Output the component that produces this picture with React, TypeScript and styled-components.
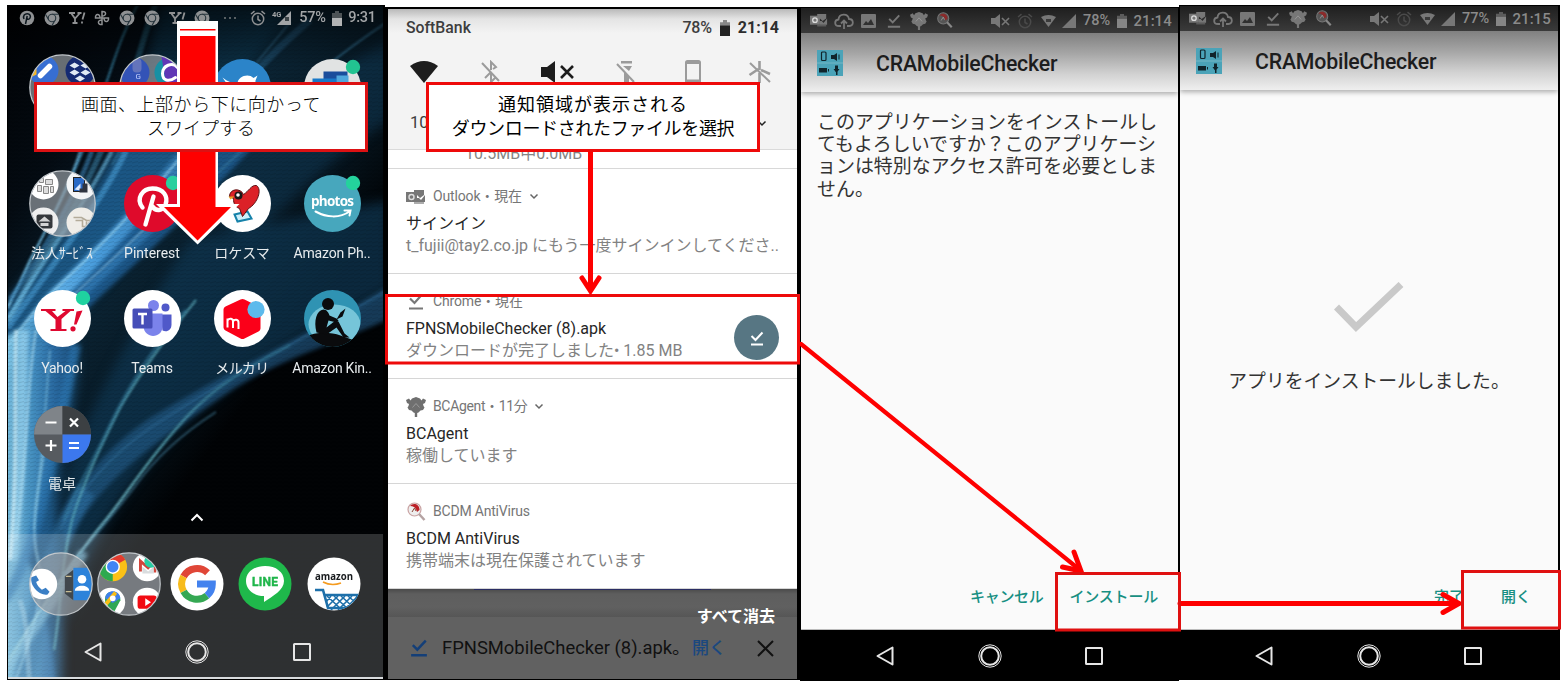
import React from "react";
import styled, { createGlobalStyle } from "styled-components";

const Global = createGlobalStyle`
  * { box-sizing: border-box; }
  body { margin: 0; background: #fff; font-family: Roboto, "Noto Sans CJK JP", sans-serif; }
  svg { display: block; flex: none; }
`;

const Stage = styled.main`
  position: relative;
  width: 1567px;
  height: 686px;
  overflow: hidden;
  display: flex;
  align-items: flex-start;
  padding: 5px 0 0 7px;
`;

/* ---------- shared text ---------- */
const Txt = styled.span<{ $s: number; $c?: string; $w?: number; $ls?: number }>`
  font-size: ${(p) => p.$s}px;
  color: ${(p) => p.$c ?? "inherit"};
  font-weight: ${(p) => p.$w ?? 400};
  letter-spacing: ${(p) => p.$ls ?? 0}px;
  line-height: 1.2;
  white-space: nowrap;
`;

const Cell = styled.div<{ $w: number }>`
  width: ${(p) => p.$w}px;
  flex: none;
  display: flex;
  justify-content: center;
  align-items: center;
`;

/* ---------- home screen ---------- */
const Home = styled.section`
  position: relative;
  width: 378px;
  height: 675px;
  border: 1px solid #000;
  border-right-width: 2px;
  overflow: hidden;
  background: #03070b;
  color: #e8ecee;
`;
const Wallpaper = styled.svg`
  position: absolute;
  left: 0;
  top: 0;
`;
const HomeContent = styled.div`
  position: relative;
  display: flex;
  flex-direction: column;
  height: 673px;
  border-bottom: 2px solid #d9dcde;
`;
const HomeStatus = styled.div`
  display: flex;
  align-items: center;
  height: 24px;
  padding-left: 6px;
  color: #a3a5a7;
`;
const AppGrid = styled.div`
  display: grid;
  grid-template-columns: repeat(4, 90px);
  grid-auto-rows: 115.5px;
  padding: 24px 0 0 9px;
  height: 483px;
`;
const AppTile = styled.div`
  display: flex;
  flex-direction: column;
  align-items: center;
`;
const AppIcon = styled.div`
  height: 67px;
  display: flex;
  align-items: center;
  margin-bottom: 8px;
`;
const Chevron = styled.div`
  height: 21px;
  display: flex;
  justify-content: center;
  padding-left: 2px;
`;
const Dock = styled.div`
  height: 143px;
  background: rgba(255, 255, 255, 0.18);
`;
const DockRow = styled.div`
  display: flex;
  align-items: center;
  height: 100px;
  padding-left: 19px;
`;
const NavRow = styled.div<{ $h: number; $black?: boolean; $l: number }>`
  display: flex;
  flex: none;
  align-items: center;
  height: ${(p) => p.$h}px;
  padding-left: ${(p) => p.$l}px;
  padding-top: ${(p) => (p.$black ? 2 : 0)}px;
  background: ${(p) => (p.$black ? "#000" : "transparent")};
`;

const NavIcons = () => (
  <>
    <Cell $w={104.5}>
      <svg width="20" height="24" viewBox="0 0 20 24" fill="none" stroke="#e6e6e6" strokeWidth="2" strokeLinejoin="round">
        <path d="M2.500 12 L17.500 3.500 V20.500 Z" />
      </svg>
    </Cell>
    <Cell $w={104.5}>
      <svg width="26" height="26" viewBox="0 0 26 26" fill="none" stroke="#e6e6e6">
        <circle cx="13" cy="13" r="11.200" strokeWidth="1" />
        <circle cx="13" cy="13" r="8.800" strokeWidth="2" />
      </svg>
    </Cell>
    <Cell $w={104.5}>
      <svg width="20" height="20" viewBox="0 0 20 20" fill="none" stroke="#e6e6e6" strokeWidth="2">
        <rect x="2" y="2" width="16" height="16" rx=".5" />
      </svg>
    </Cell>
  </>
);

const HomeWallpaper = () => (
  <Wallpaper width="376" height="673" viewBox="8 6 376 673" fill="none">
    <defs>
      <linearGradient id="base" x1="0" y1="0" x2=".75" y2="1">
        <stop offset="0" stopColor="#010204" />
        <stop offset=".2" stopColor="#040b12" />
        <stop offset=".38" stopColor="#0b2434" />
        <stop offset=".55" stopColor="#071722" />
        <stop offset=".68" stopColor="#010305" />
      </linearGradient>
      <linearGradient id="swoosh" gradientUnits="userSpaceOnUse" x1="10" y1="370" x2="215" y2="150">
        <stop offset="0" stopColor="#7cc6f0" />
        <stop offset=".45" stopColor="#4a9edd" />
        <stop offset="1" stopColor="#2b6ea2" />
      </linearGradient>
      <linearGradient id="fadeUp" gradientUnits="userSpaceOnUse" x1="8" y1="340" x2="150" y2="6">
        <stop offset="0" stopColor="#7cc8ee" />
        <stop offset=".55" stopColor="#4493bd" />
        <stop offset="1" stopColor="#1f586c" />
      </linearGradient>
      <linearGradient id="leftGlow" gradientUnits="userSpaceOnUse" x1="8" y1="0" x2="74" y2="0">
        <stop offset="0" stopColor="#7cc3e3" />
        <stop offset=".35" stopColor="#4a97c8" />
        <stop offset=".7" stopColor="#2a6ba3" />
        <stop offset="1" stopColor="#1b4d7a" />
      </linearGradient>
      <linearGradient id="thin" gradientUnits="userSpaceOnUse" x1="230" y1="375" x2="60" y2="600">
        <stop offset="0" stopColor="#2f6f8c" />
        <stop offset=".4" stopColor="#5fb0bd" />
        <stop offset="1" stopColor="#8cc8dc" />
      </linearGradient>
      <linearGradient id="topShade" x1="0" y1="0" x2="0" y2="1">
        <stop offset="0" stopColor="#000" stopOpacity=".6" />
        <stop offset="1" stopColor="#000" stopOpacity="0" />
      </linearGradient>
      <filter id="soft" filterUnits="userSpaceOnUse" x="-40" y="-40" width="480" height="780" colorInterpolationFilters="sRGB"><feGaussianBlur stdDeviation="6" /></filter>
      <filter id="mid" filterUnits="userSpaceOnUse" x="-40" y="-40" width="480" height="780" colorInterpolationFilters="sRGB"><feGaussianBlur stdDeviation="2.200" /></filter>
      <filter id="fine" filterUnits="userSpaceOnUse" x="-40" y="-40" width="480" height="780" colorInterpolationFilters="sRGB"><feGaussianBlur stdDeviation=".9" /></filter>
      <pattern id="weave" width="6" height="4" patternUnits="userSpaceOnUse"><path d="M0 3 L6 1.500" stroke="#000" strokeOpacity=".1" /></pattern>
    </defs>
    <rect x="8" y="6" width="376" height="673" fill="url(#base)" />
    <g filter="url(#soft)">
      <path d="M160 0 C145 90 110 180 60 250 L100 250 C170 170 230 90 300 0Z" fill="#0f3a54" opacity=".55" />
      <path d="M390 40 C300 90 230 150 190 210 L250 240 C300 190 340 150 390 120Z" fill="#103854" opacity=".55" />
      <path d="M190 240 C150 300 90 400 64 480 L64 620 C90 530 150 440 250 370 C310 330 350 310 390 290 V200 Z" fill="#0f3650" opacity=".75" />
      <path d="M118 145 C84 210 35 270 0 312 V400 C70 320 130 260 170 190 L190 145Z" fill="#1f5f90" opacity=".85" />
      <path d="M0 350 L66 310 C84 350 74 400 62 450 C50 510 66 600 60 690 H0 Z" fill="#23659a" opacity=".85" />
    </g>
    <g filter="url(#mid)">
      <path d="M390 285 C300 338 230 370 150 418 C110 445 80 480 60 520 L66 545 C100 480 150 445 235 388 C290 355 350 338 390 318 Z" fill="#245f8e" opacity=".6" />
      <path d="M190 148 C138 212 90 268 40 320 C25 340 14 360 4 385 L4 440 C30 380 60 334 92 304 C146 254 205 200 252 148 Z" fill="#1f5f96" opacity=".8" />
      <path d="M183 158 C134 220 92 262 56 296 C34 322 16 344 4 366" stroke="url(#swoosh)" strokeWidth="15" />
      <path d="M205 176 C150 232 108 268 76 300 C50 332 28 362 6 410" stroke="#367fb9" strokeWidth="7" opacity=".75" />
      <path d="M0 340 L64 300 C86 340 68 390 56 440 C46 490 34 520 28 560 C44 600 52 640 56 690 H0 Z" fill="url(#leftGlow)" opacity=".9" />
      <path d="M76 345 C64 400 55 450 40 512 C32 540 20 580 4 600" stroke="#2c76b0" strokeWidth="10" opacity=".7" />
      <path d="M24 330 C22 400 24 460 12 560" stroke="#9fd9f3" strokeWidth="10" opacity=".65" />
      <path d="M86 490 C60 530 40 590 22 690" stroke="#2f72a4" strokeWidth="20" opacity=".6" />
      <path d="M84 552 C60 590 34 630 4 672" stroke="#82c2de" strokeWidth="9" opacity=".65" />
    </g>
    <g filter="url(#fine)">
      <path d="M140 0 C118 40 112 70 100 100 C88 145 60 205 30 260 L8 308" stroke="url(#fadeUp)" strokeWidth="2.200" opacity=".85" />
      <path d="M157 0 C134 60 134 90 110 130 C90 180 65 225 38 266 L8 322" stroke="url(#fadeUp)" strokeWidth="6" opacity=".5" />
      <path d="M80 151 C68 190 40 240 8 306" stroke="#6db6dc" strokeWidth="1.800" opacity=".85" />
      <path d="M92 151 C76 195 44 250 10 300" stroke="#3c83b6" strokeWidth="5" opacity=".6" />
      <path d="M112 151 C84 205 48 255 8 318" stroke="#70bfe8" strokeWidth="4" opacity=".6" />
      <path d="M126 151 C100 205 54 262 8 328" stroke="#4a9cd3" strokeWidth="6" opacity=".6" />
      <path d="M182 156 C135 212 85 262 46 298 C28 318 14 338 4 350" stroke="#9ddaf7" strokeWidth="2" opacity=".7" />
      <path d="M178 196 C140 235 100 270 68 300" stroke="#9bd4f4" strokeWidth="1.800" opacity=".55" />
      <path d="M178 60 C150 105 130 130 112 165" stroke="#3d86a9" strokeWidth="1.600" opacity=".6" />
      <path d="M390 20 C345 50 300 84 270 120 C250 145 225 165 180 208" stroke="#3a7ea3" strokeWidth="1.800" opacity=".7" />
      <path d="M310 20 C282 44 268 58 252 76" stroke="#24587a" strokeWidth="7" opacity=".55" />
      <path d="M290 22 C268 50 258 60 246 76" stroke="#3a7598" strokeWidth="1.600" opacity=".6" />
      <path d="M390 289 C300 340 230 376 150 428 C110 456 80 490 60 530" stroke="#3a7ba8" strokeWidth="1.800" opacity=".45" />
      <path d="M196 300 C160 345 136 380 120 408 C104 440 84 480 72 520 C60 570 62 600 54 650" stroke="#5fb0c0" strokeWidth="2.400" opacity=".7" />
      <path d="M186 310 C150 350 126 392 110 425 C94 460 80 480 64 520" stroke="#3a86a8" strokeWidth="3.500" opacity=".45" />
      <path d="M290 345 C230 375 200 400 175 430 C142 468 124 498 104 522 C74 558 40 610 4 668" stroke="url(#thin)" strokeWidth="2.600" opacity=".85" />
      <path d="M216 412 C180 435 152 462 134 488 C110 520 80 552 52 590" stroke="#447f9c" strokeWidth="1.600" opacity=".65" />
      <path d="M50 350 C46 400 42 460 34 530" stroke="#8ccfee" strokeWidth="2.500" opacity=".4" />
      <path d="M36 330 C26 390 28 450 16 540" stroke="#b4e3f7" strokeWidth="3" opacity=".5" />
      <path d="M16 330 C14 390 18 480 10 560" stroke="#dff5fc" strokeWidth="4" opacity=".55" />
      <path d="M46 440 C36 500 30 530 38 560 C46 600 30 640 14 684" stroke="#9bd8ef" strokeWidth="3" opacity=".45" />
      <path d="M20 600 C30 630 26 655 30 684" stroke="#c1e6f4" strokeWidth="5" opacity=".35" />
    </g>
    <rect x="8" y="6" width="376" height="673" fill="url(#weave)" />
    <rect x="8" y="6" width="376" height="60" fill="url(#topShade)" />
  </Wallpaper>
);

const Chrome = ({ x, y, r, gray }: { x: number; y: number; r: number; gray?: boolean }) => (
  <g transform={`translate(${x} ${y}) scale(${r / 10})`}>
    <circle r="10" fill={gray ? "#8f9193" : "#fbc116"} />
    {!gray && <path d="M0 0 L-8.700 -5 A10 10 0 0 1 8.700 -5 Z" fill="#e33b2e" />}
    {!gray && <path d="M0 0 L-8.700 -5 A10 10 0 0 0 0 10 Z" fill="#2da94f" />}
    {gray && <path d="M0 -5 H9 M-4.300 2.500 L-8.800 -5 M4.300 2.500 L0 10" stroke="#26343c" strokeWidth="1.500" />}
    <circle r="5" fill={gray ? "#8f9193" : "#fff"} stroke={gray ? "#26343c" : "none"} strokeWidth="1.500" />
    {!gray && <circle r="4" fill="#4285f4" />}
  </g>
);

const SmallChrome = () => (
  <svg width="16" height="16" viewBox="0 0 16 16"><Chrome x={8} y={8} r={7.5} gray /></svg>
);
const YSmall = () => (
  <svg width="18" height="14" viewBox="0 0 18 14" fill="none" stroke="#8f9193" strokeWidth="1.800">
    <path d="M1 2 H7 M3 2 L7 7.500 L12 2 M9.500 2 H13.500 M7 7 V12 M4.500 12 H9.500 M16.500 1.500 L14.500 8.500 M14 10.500 V12.500" />
  </svg>
);
const Alarm = ({ c = "#8f9193" }: { c?: string }) => (
  <svg width="16" height="16" viewBox="0 0 16 16" fill="none" stroke={c} strokeWidth="1.500">
    <circle cx="8" cy="9" r="5.700" /><path d="M8 5.500 V9.500 L10.500 11 M1 4 L4.500 1.200 M15 4 L11.500 1.200" />
  </svg>
);
const Battery = ({ c, top, h = 15 }: { c: string; top: string; h?: number }) => (
  <svg width="10" height={h} viewBox="0 0 10 15" preserveAspectRatio="none">
    <path d="M0 2 H3 V0 H7 V2 H10 V5 H0 Z" fill={top} /><rect y="5" width="10" height="10" fill={c} />
  </svg>
);

const Disc = ({ fill, dot, children }: { fill: string; dot?: string; children?: React.ReactNode }) => (
  <svg width="67" height="67" viewBox="-33.5 -33.5 67 67">
    <circle r="28.500" fill={fill} />
    {children}
    {dot && <circle cx="20.500" cy="-20.500" r="7.200" fill={dot} />}
  </svg>
);
const Folder = ({ id, size = 67, children }: { id: string; size?: number; children: React.ReactNode }) => (
  <svg width={size} height={size} viewBox="-33.5 -33.5 67 67">
    <clipPath id={id}><circle r="32.500" /></clipPath>
    <circle r="32.500" fill="#9a9fa5" fillOpacity=".68" />
    <g clipPath={`url(#${id})`}>{children}</g>
    <circle r="32.700" fill="none" stroke="#c3c8cc" strokeWidth="1.300" />
  </svg>
);

const PencilFolder = () => (
  <Folder id="f1">
    <circle cx="-19" cy="-17" r="15" fill="#376ed2" />
    <path d="M-34 -17 l8 -3 v7 l-8 4z" fill="#f4b728" />
    <path d="M-22 -12 L-13 -21" stroke="#fff" strokeWidth="5.500" strokeLinecap="round" />
    <circle cx="18" cy="-17" r="15" fill="#142a72" />
    <path d="M12 -25 l5 3 -5 3 -5 -3z M23 -25 l5 3 -5 3 -5 -3z M12 -18 l5 3 -5 3 -5 -3z M23 -18 l5 3 -5 3 -5 -3z M17.500 -12 l5 3 -5 3 -5 -3z" fill="#dfe9f4" />
  </Folder>
);
const GoogleFolder = () => (
  <Folder id="f2">
    <circle cx="-18" cy="-15" r="15" fill="#3353b7" />
    <rect x="-20" y="-29" width="9" height="14" rx="4" fill="#6474bb" />
    <text x="-17" y="-9" fontSize="8" fill="#c7d3ff" fontFamily="Roboto">G</text>
    <circle cx="17" cy="-15" r="15" fill="#1890a4" />
    <path d="M9 -31 A15 15 0 0 1 30 -4 L14 -1Z" fill="#6037b6" />
    <path d="M25 -20 C20 -26 10 -22 10 -14 C10 -7 16 -5 23 -10" fill="none" stroke="#fff" strokeWidth="3" strokeLinecap="round" />
  </Folder>
);
const BizFolder = () => (
  <Folder id="f3">
    <circle cx="-19" cy="-19" r="15" fill="#fff" />
    <path d="M-23 -25 h4 v4 h-4z M-17 -24 h7 v5 h-7z M-25 -18 h4 v6 h-4z M-19 -17 h5 v7 h-5z M-12 -17 h3 v6 h-3z" fill="#ddd" stroke="#888" strokeWidth="1" />
    <circle cx="19" cy="-19" r="15" fill="#f3f5f7" />
    <rect x="11" y="-26" width="11" height="14" fill="#2869c6" stroke="#222" /><path d="M12 -14 l6 -6 v7z" fill="#dceaff" /><path d="M20 -20 h5 v9 h-8 v-4 h3z" fill="#2e3440" />
    <circle cx="-19" cy="19" r="15" fill="#eee" />
    <rect x="-26" y="11" width="16" height="14" rx="2" fill="#34373b" /><path d="M-24 18 l6 -5 6 5z M-22 19.500 h8 v3 h-8z" fill="#d4d4d4" />
    <circle cx="19" cy="19" r="15" fill="#efede8" />
    <path d="M11 14 h8 l5 3 h4 M13 17 h7 M20 16 v7 h4 v-5" stroke="#b3ab99" strokeWidth="1.600" fill="none" />
  </Folder>
);

const homeApps: { label: string; icon: React.ReactNode; ls?: number }[] = [
  { label: "", icon: <PencilFolder /> },
  { label: "", icon: <GoogleFolder /> },
  {
    label: "", icon: (
      <Disc fill="#2b84c9">
        <path d="M-20 -10 C-15 -6 -10 -4 -5 -4 C-5 -11 6 -15 11 -9.500 L15 -12 L13 -7 C13 8 0 18 -17 12 C-12 12 -8 10 -6 7 C-12 6 -13 2 -13 0 Z" fill="#fff" />
      </Disc>
    ),
  },
  {
    label: "", icon: (
      <Disc fill="#e1e3e3" dot="#22c391">
        <rect x="-9" y="-16" width="24" height="20" fill="#1a4d9c" /><rect x="-20" y="-9" width="24" height="20" fill="#1878c8" /><rect x="4" y="-12" width="12" height="16" fill="#50a7dc" />
      </Disc>
    ),
  },
  { label: "法人ｻｰﾋﾞｽ", icon: <BizFolder />, ls: -0.2 },
  {
    label: "Pinterest", icon: (
      <Disc fill="#df0a2b" dot="#29cf9f">
        <path d="M-10 4 C-17 -5 -10 -15 0 -15 C11 -15 16 -7 13 1 C10 8 3 8 0 3 M1 -7 L-7 21" fill="none" stroke="#fff" strokeWidth="4.400" strokeLinecap="round" />
      </Disc>
    ),
  },
  {
    label: "ロケスマ", icon: (
      <Disc fill="#fff">
        <path d="M-8 11 L5 8 L9 15 L-5 18 Z" fill="#cdeffa" stroke="#1682aa" strokeWidth="2" />
        <path d="M-13 -7 C-13 -15 -2 -16 1 -9 C6 -12 9 -19 14 -18 C20 -14 15 0 6 5 L0 13 L-3 5 C-9 3 -9 -3 -9 -5 Z" fill="#dc2127" stroke="#5a1113" strokeWidth="1" />
        <path d="M-14 -7 h6 l-4 3z" fill="#e8a426" /><circle cx="-4" cy="-8" r="4" fill="#191919" /><circle cx="-4.500" cy="-8.500" r="1.800" fill="#fff" />
      </Disc>
    ),
  },
  {
    label: "Amazon Ph..", ls: -0.2, icon: (
      <Disc fill="#47a7bd" dot="#24d39c">
        <text x="0" y="2" textAnchor="middle" fontSize="13.500" fontWeight="700" fill="#fff" fontFamily="Open Sans" textLength="43">photos</text>
        <path d="M-17 8 C-6 14 7 15 17 8 M12 7 H18 L17 12" fill="none" stroke="#fff" strokeWidth="2" strokeLinecap="round" />
      </Disc>
    ),
  },
  {
    label: "Yahoo!", ls: -0.2, icon: (
      <Disc fill="#fff" dot="#1fd2a0">
        <path d="M-21.500 -9.500 H-7 V-7.500 H-10.500 L-5 -1.500 L3 -7.500 H0 V-9.500 H11.500 V-7.500 H8 L-1 0.500 V10.500 H4 V12.500 H-12 V10.500 H-7 V1 L-17 -7.500 H-21.500 Z M14 -7 L20 -8 L14 6 H11.500 Z" fill="#df0930" /><circle cx="10.500" cy="10.300" r="2.600" fill="#df0930" />
      </Disc>
    ),
  },
  {
    label: "Teams", ls: -0.1, icon: (
      <Disc fill="#fff">
        <circle cx="1" cy="-13" r="5.500" fill="#7b83eb" /><circle cx="13" cy="-11" r="4" fill="#5059c9" />
        <path d="M8 -4 H19 V6 C19 12 14 14 10 12 Z" fill="#5059c9" /><path d="M-8 -5 H10 V8 C10 20 -8 21 -9 8 Z" fill="#7b83eb" />
        <rect x="-20" y="-10" width="20" height="20" rx="1.500" fill="#464eb8" />
        <path d="M-14.500 -4.500 H-5.500 M-10 -4.500 V6" stroke="#fff" strokeWidth="2.400" />
      </Disc>
    ),
  },
  {
    label: "メルカリ", ls: -0.5, icon: (
      <Disc fill="#fff">
        <path d="M-19 -9 Q-19 -11 -17 -12 L-2 -19 Q0 -20 2 -19 L18 -11 V10 Q18 12 16 13 L2 20 Q0 21 -2 20 L-17 12 Q-19 11 -19 9 Z" fill="#fb0019" />
        <path d="M-15 9 V0 M-15 2 C-13 -1 -9.500 0 -9.500 3 V9.500 M-9.500 3 C-8 0 -4 1 -4 4 V10.500" fill="none" stroke="#fff" strokeWidth="2" />
        <circle cx="13.500" cy="-9" r="8.600" fill="#5dbaec" />
      </Disc>
    ),
  },
  {
    label: "Amazon Kin..", ls: -0.25, icon: (
      <Disc fill="#2f93b3">
        <clipPath id="kin"><circle r="28.500" /></clipPath>
        <g clipPath="url(#kin)">
          <ellipse cx="2" cy="6" rx="26" ry="20" fill="#8fd6e6" opacity=".75" />
          <path d="M-30 20 C-16 12 -2 14 8 17 L22 22 L17 32 H-24Z" fill="#0a0b0d" />
          <circle cx="-4.500" cy="-14.500" r="6" fill="#0a0b0d" />
          <path d="M-16 14 C-19 2 -16 -8 -9 -9 C-6 -9 -4 -6 -3 -3 L4 0 L6 2 L4 4 L-4 2 L-6 9 L3 2 L6 3 L12 15 L17 19 L11 19 L4 9 L-6 16 Z" fill="#0a0b0d" />
          <path d="M4 1 L8 -6 L13 -10 L10 -2 Z" fill="#0a0b0d" />
        </g>
      </Disc>
    ),
  },
  {
    label: "電卓", icon: (
      <Disc fill="#575b60">
        <path d="M0 0 H-28.500 A28.500 28.500 0 0 1 0 -28.500Z" fill="#7f8489" /><path d="M0 0 V-28.500 A28.500 28.500 0 0 1 28.500 0Z" fill="#3c4043" /><path d="M0 0 H28.500 A28.500 28.500 0 0 1 0 28.500Z" fill="#3c78ee" />
        <path d="M-17 -12 H-6 M-17 11 H-6 M-11.500 5.500 V16.500 M6.500 8.500 H16.500 M6.500 13.500 H16.500 M7.500 -16 L15.500 -8 M15.500 -16 L7.500 -8" stroke="#fff" strokeWidth="2.200" />
      </Disc>
    ),
  },
];

const HomeScreen = () => (
  <Home>
    <HomeWallpaper />
    <HomeContent>
      <HomeStatus>
        <Cell $w={25}>
          <svg width="16" height="16" viewBox="0 0 16 16"><circle cx="8" cy="8" r="7.300" fill="#8f9193" /><path d="M5 9 C3.500 5.500 6 3.700 8.200 3.700 C11 3.700 12 6 11 8 C10 10 8 9.500 8 8 M8.200 6 L6.500 14" fill="none" stroke="#0b151c" strokeWidth="1.500" /></svg>
        </Cell>
        <Cell $w={25}><SmallChrome /></Cell>
        <Cell $w={25}><YSmall /></Cell>
        <Cell $w={25}>
          <svg width="16" height="16" viewBox="0 0 16 16" fill="none" stroke="#8f9193" strokeWidth="1.500"><path d="M8 8 V1.500 C12.500 1 13 6 8 6 M8 8 H14.500 C15 12.500 10 13 10 8 M8 8 V14.500 C3.500 15 3 10 8 10 M8 8 H1.500 C1 3.500 6 3 6 8" /></svg>
        </Cell>
        <Cell $w={25}><SmallChrome /></Cell>
        <Cell $w={25}><SmallChrome /></Cell>
        <Cell $w={26}><YSmall /></Cell>
        <Cell $w={24}><SmallChrome /></Cell>
        <Cell $w={32}><svg width="14" height="4" viewBox="0 0 14 4" fill="#75787a"><circle cx="2" cy="2" r="1" /><circle cx="7" cy="2" r="1" /><circle cx="12" cy="2" r="1" /></svg></Cell>
        <Cell $w={24}><Alarm /></Cell>
        <Cell $w={24}>
          <svg width="20" height="16" viewBox="0 0 20 16"><path d="M19 1 V15 H5 Z" fill="#a3a5a7" /><path d="M13 7 h4 v4 h-4z" fill="#3b4347" /><text x="0" y="7" fontSize="7.500" fontWeight="700" fill="#a3a5a7" fontFamily="Roboto">4G</text></svg>
        </Cell>
        <Cell $w={37}><Txt $s={14.500} $w={500} $ls={-0.2}>57%</Txt></Cell>
        <Cell $w={11}>
          <svg width="10" height="15" viewBox="0 0 10 15"><path d="M0 2 H3 V0 H7 V2 H10 V7 H0 Z" fill="#4d5356" /><rect y="7" width="10" height="8" fill="#b2b4b5" /></svg>
        </Cell>
        <Cell $w={40}><Txt $s={14.500} $w={500} $ls={-0.3}>9:31</Txt></Cell>
      </HomeStatus>
      <AppGrid>
        {homeApps.map((a, i) => (
          <AppTile key={i}>
            <AppIcon>{a.icon}</AppIcon>
            <Txt $s={14} $ls={a.ls ?? 0}>{a.label}</Txt>
          </AppTile>
        ))}
      </AppGrid>
      <Chevron>
        <svg width="14" height="9" viewBox="0 0 14 9" fill="none" stroke="#fff" strokeWidth="2"><path d="M1.500 7.500 L7 2 L12.500 7.500" /></svg>
      </Chevron>
      <Dock>
        <DockRow>
          <Cell $w={68}>
            <Folder id="f4" size={64}>
              <circle cx="-20" cy="0" r="16" fill="#fff" />
              <path d="M-31 -7 C-33 3 -21 13 -14 11 L-12 8 L-16 4 L-20 6 C-23 4 -25 1 -26 -2 L-23 -4 L-26 -9 Z" fill="#3b7fc5" />
              <path d="M4 -8 L13 -15 V17 L4 10Z" fill="#41484d" /><rect x="13" y="-17" width="22" height="34" fill="#2d83da" />
              <circle cx="22" cy="-5" r="4.500" fill="#fff" /><path d="M14.500 7 C14.500 0 29.500 0 29.500 7Z" fill="#fff" /><path d="M5 -8 h6 M5 8 h6" stroke="#c9bd94" strokeWidth="1.500" />
            </Folder>
          </Cell>
          <Cell $w={68}>
            <Folder id="f5" size={64}>
              <Chrome x={-17} y={-18} r={15} />
              <circle cx="19" cy="-18" r="15" fill="#fff" /><path d="M12 -13 V-24 L20 -17 L27 -24 V-12" fill="none" stroke="#d3453b" strokeWidth="3" /><path d="M14 -18 L20 -13 L26 -18 V-11 H14Z" fill="#d9dcde" />
              <circle cx="-19" cy="19" r="15" fill="#fff" /><path d="M-17 32 L-25 18 C-27 5 -9 5 -9 17Z" fill="#2ea755" /><path d="M-25 15 C-24 5 -10 5 -9 15 L-17 20Z" fill="#3e7fea" /><path d="M-24 21 L-14 9" stroke="#f9bd15" strokeWidth="4" /><circle cx="-17" cy="15" r="3" fill="#fff" />
              <circle cx="19" cy="19" r="15" fill="#fff" /><rect x="9" y="12" width="20" height="14" rx="3" fill="#f10b13" /><path d="M17 15 L23 19 L17 23Z" fill="#fff" />
              <circle cx="23" cy="-24" r="7" fill="#27cda2" />
            </Folder>
          </Cell>
          <Cell $w={68}>
            <svg width="54" height="54" viewBox="-27 -27 54 54"><circle r="26.500" fill="#fff" />
              <g fill="none" strokeWidth="7">
                <path d="M-13.400 -7.500 A15.300 15.300 0 0 1 10.500 -11.200" stroke="#e04637" /><path d="M-13.400 7.400 A15.300 15.300 0 0 1 -13.400 -7.500" stroke="#f7bb1b" />
                <path d="M10 11.600 A15.300 15.300 0 0 1 -13.400 7.400" stroke="#35a853" /><path d="M0 0 H15.300 A15.300 15.300 0 0 1 10 11.600" stroke="#4382ee" />
              </g>
            </svg>
          </Cell>
          <Cell $w={68}>
            <svg width="54" height="54" viewBox="-27 -27 54 54"><circle r="26.500" fill="#1fb84b" /><path d="M0 -18 C11 -18 19 -12 19 -3 C19 6 8 12 -1 18 V12 C-12 12 -19 5 -19 -3 C-19 -12 -11 -18 0 -18Z" fill="#fff" />
              <text x="0" y="1.500" textAnchor="middle" fontSize="12" fontWeight="700" fill="#20b64b" stroke="#20b64b" strokeWidth=".4" fontFamily="Roboto" textLength="26">LINE</text></svg>
          </Cell>
          <Cell $w={69}>
            <svg width="54" height="54" viewBox="-27 -27 54 54"><circle r="26.500" fill="#fff" />
              <clipPath id="ama"><circle r="26.500" /></clipPath>
              <text x="0" y="-4" textAnchor="middle" fontSize="11" fontWeight="700" fill="#16191c" fontFamily="Open Sans" textLength="38" lengthAdjust="spacingAndGlyphs">amazon</text>
              <path d="M-11 -2 C-5 1.200 1 1.200 7 -1" stroke="#f59b1f" strokeWidth="1.600" fill="none" />
              <g clipPath="url(#ama)" fill="none" stroke="#1e70aa" strokeWidth="1.600"><path d="M-19 6 H-11 L-6 24 H19 L24 11 H-9" strokeWidth="2.600" /><path d="M-7 12 L8 26 M0 12 L14 25 M7 12 L19 23 M14 12 L22 19 M-3 12 L-8 18 M4 12 L-7 23 M11 12 L-3 26 M18 12 L4 26 M24 12 L11 25" /></g></svg>
          </Cell>
        </DockRow>
        <NavRow $h={36} $l={32.5}><NavIcons /></NavRow>
      </Dock>
    </HomeContent>
  </Home>
);

/* ---------- notification shade ---------- */
const Shade = styled.section`
  width: 415px;
  height: 673px;
  margin-top: 2px;
  border: 1px solid #000;
  border-width: 2px 3px 1px 3px;
  background: #606060;
  display: flex;
  flex-direction: column;
`;
const QuickPanel = styled.div`
  position: relative;
  z-index: 1;
  height: 141px;
  flex: none;
  border-bottom: 1px solid #dadada;
  background: linear-gradient(#b9b9b9 0, #e4e4e4 10px, #f3f3f3 24px);
  color: #3d3d3d;
`;
const ShadeStatus = styled.div`
  display: flex;
  align-items: center;
  height: 38px;
  padding: 0 18px;
  gap: 8px;
`;
const Spacer = styled.div`
  flex: 1;
`;
const QuickIcons = styled.div`
  display: flex;
  align-items: center;
  height: 50px;
  padding-left: 2.5px;
`;
const QuickFoot = styled.div`
  display: flex;
  align-items: center;
  justify-content: space-between;
  height: 52px;
  padding: 0 30px 0 22px;
`;
const Partial = styled.div`
  height: 28px;
  margin-top: -9px;
  flex: none;
  background: #fff;
  border-bottom: 1px solid #d8d8d8;
  display: flex;
  align-items: flex-start;
  padding: 3px 0 0 77px;
`;
const Note = styled.article`
  height: 105px;
  flex: none;
  background: #fff;
  border-bottom: 1px solid #d6d6d6;
  display: flex;
  justify-content: space-between;
  align-items: center;
  padding: 0 18px;
`;
const NoteText = styled.div`
  display: flex;
  flex-direction: column;
  height: 105px;
  padding-top: 17px;
`;
const NoteHead = styled.div`
  display: flex;
  align-items: center;
  height: 22px;
  margin-bottom: 5px;
  gap: 7px;
`;
const NoteLine = styled.div`
  height: 22px;
  display: flex;
  align-items: center;
`;
const NoteAction = styled.div`
  width: 45px;
  height: 45px;
  margin-top: 23px;
  border-radius: 50%;
  background: #577683;
  display: flex;
  align-items: center;
  justify-content: center;
`;
const ClearRow = styled.div`
  height: 28px;
  flex: none;
  background: linear-gradient(#4a4a4a 0, #5e5e5e 5px, #606060 18px, #565656);
`;
const BlueLine = styled.div`
  width: 237px;
  height: 1px;
  margin-left: 86px;
  background: #2a2d63;
`;
const Snack = styled.div`
  position: relative;
  flex: 1;
  background: #616161;
  display: flex;
  align-items: center;
  padding: 0 23px 0 22px;
`;
const ClearAll = styled.div`
  position: absolute;
  right: 22px;
  top: -10px;
`;

const OutlookIcon = ({ c = "#777", w = 20 }: { c?: string; w?: number }) => (
  <svg width={w} height={w * 0.8} viewBox="0 0 20 16" fill={c}>
    <path d="M8 1 H18 V6 L14 9 L11 6 H8Z M11 9 H13 L15 11 L19 6 V13 H11Z" /><rect y="3" width="11" height="10" /><path d="M8 13 h10 v2 h-10z" opacity=".6" />
    <circle cx="5.500" cy="8" r="2.500" fill="none" stroke="#ddd" strokeWidth="1.400" />
  </svg>
);
const DoneIcon = ({ c = "#777", w = 16, cut }: { c?: string; w?: number; cut?: boolean }) => (
  <svg width={w} height={w} viewBox="0 0 16 16" fill="none" stroke={c} strokeWidth="2.200">
    <path d={cut ? "M2 4.500 L6.500 9 L14 .5 M1 14.500 H15" : "M2.500 5.500 L6.500 9.500 L14 1.500 M1 14.500 H15"} />
  </svg>
);
const BugIcon = ({ c = "#6f6f6f", w = 20 }: { c?: string; w?: number }) => (
  <svg width={w} height={w} viewBox="0 0 20 20" fill={c}>
    <path d="M6 1.500 L10 0 L14 1.500 L15.500 3.500 L17 1.500 L20 3 L19 6 L17 7 L17.500 9 L18.500 10.500 L17 13 L14.500 13.500 L12.500 15.500 L11.200 16 V20 H8.800 V16 L7.500 15.500 L5.500 13.500 L3 13 L1.500 10.500 L2.500 9 L3 7 L1 6 L0 3 L3 1.500 L4.500 3.500Z" /><path d="M6.500 10.500 L10 6.500 L13.500 10.500" stroke="#999" fill="none" />
  </svg>
);
const VirusIcon = ({ dim, w = 20 }: { dim?: boolean; w?: number }) => (
  <svg width={w} height={w} viewBox="0 0 20 20" fill="none">
    <circle cx="8.500" cy="7.500" r="6.500" fill={dim ? "#555" : "#eee"} stroke={dim ? "#777" : "#c9a3a3"} strokeWidth="1.200" />
    <path d="M4 4 C7 0 14 2 13.500 8 L11 10 C10 6 8 4 4 4Z" fill={dim ? "#8c2a2a" : "#bb2026"} /><path d="M6 10 L8.500 6 L10 9" stroke={dim ? "#999" : "#843"} />
    <path d="M13 12 L18.500 18" stroke={dim ? "#888" : "#b5a3a3"} strokeWidth="2.500" />
  </svg>
);
const Down = ({ c = "#666" }: { c?: string }) => (
  <svg width="10" height="7" viewBox="0 0 10 7" fill="none" stroke={c} strokeWidth="1.500"><path d="M1.500 1.500 L5 5 L8.500 1.500" /></svg>
);

type NoteData = { icon: React.ReactNode; app: string; ls: number; arrow?: boolean; title: string; body: string; action?: boolean };
const notes: NoteData[] = [
  { icon: <OutlookIcon />, app: "Outlook・現在", ls: -0.15, arrow: true, title: "サインイン", body: "t_fujii@tay2.co.jp にもう一度サインインしてくださ.." },
  { icon: <DoneIcon cut />, app: "Chrome・現在", ls: -0.15, title: "FPNSMobileChecker (8).apk", body: "ダウンロードが完了しました• 1.85 MB", action: true },
  { icon: <BugIcon />, app: "BCAgent・11分", ls: -0.35, arrow: true, title: "BCAgent", body: "稼働しています" },
  { icon: <VirusIcon />, app: "BCDM AntiVirus", ls: -0.2, title: "BCDM AntiVirus", body: "携帯端末は現在保護されています" },
];

const ShadeScreen = () => (
  <Shade>
    <QuickPanel>
      <ShadeStatus>
        <Txt $s={15.800} $w={500}>SoftBank</Txt>
        <Spacer />
        <Txt $s={16} $w={500} $ls={-0.2}>78%</Txt>
        <Battery c="#222" top="#888" h={16} />
        <Txt $s={16} $w={700} $c="#2d2d2d">21:14</Txt>
      </ShadeStatus>
      <QuickIcons>
        <Cell $w={67.2}><svg width="28" height="22" viewBox="0 0 28 22"><path d="M0 5 Q14 -5 28 5 L14 22Z" fill="#1d1d1d" /></svg></Cell>
        <Cell $w={67.2}><svg width="20" height="24" viewBox="0 0 20 24" fill="none" stroke="#9b9b9b" strokeWidth="2"><path d="M1 3 L18 21 M10 10 V2 L15 7 L12 9 M10 12 V22 L14 18 M10 12 L4 18" /></svg></Cell>
        <Cell $w={67.2}><svg width="34" height="22" viewBox="0 0 34 22"><path d="M0 6 H6 L14 0 V22 L6 16 H0Z" fill="#1c1c1c" /><path d="M20 5 L32 17 M32 5 L20 17" stroke="#1c1c1c" strokeWidth="2.600" /></svg></Cell>
        <Cell $w={67.2}><svg width="20" height="24" viewBox="0 0 20 24" fill="#9b9b9b"><path d="M5 1 H16 V3.500 H5Z M7 6 H16 L13 11Z M8 12 L13 17 V24 H8Z" /><path d="M1 4 L18 22" stroke="#9b9b9b" strokeWidth="2" /></svg></Cell>
        <Cell $w={67.2}><svg width="16" height="25" viewBox="0 0 16 25"><rect x="1" y="1" width="14" height="23" rx="1.500" fill="none" stroke="#9b9b9b" strokeWidth="2" /><path d="M1 2.500 H15 M1 21 H15" stroke="#9b9b9b" strokeWidth="3" /></svg></Cell>
        <Cell $w={67.2}><svg width="24" height="24" viewBox="0 0 24 24" fill="none" stroke="#9b9b9b" strokeWidth="2"><path d="M2 3 L22 22" /><path d="M11.500 1 V10 M1.500 15 L10.500 9 M13 10 L22 14 M11.500 13 V23" strokeWidth="2.600" /></svg></Cell>
      </QuickIcons>
      <QuickFoot>
        <Txt $s={16.500}>10月</Txt>
        <Down c="#222" />
      </QuickFoot>
    </QuickPanel>
    <Partial><Txt $s={16} $c="#858585">10.5MB中0.0MB</Txt></Partial>
    {notes.map((n) => (
      <Note key={n.app}>
        <NoteText>
          <NoteHead>
            <Cell $w={20}>{n.icon}</Cell>
            <Txt $s={14} $c="#767676" $ls={n.ls}>{n.app}</Txt>
            {n.arrow && <Down />}
          </NoteHead>
          <NoteLine><Txt $s={16} $c="#262626">{n.title}</Txt></NoteLine>
          <NoteLine><Txt $s={16} $c="#828282">{n.body}</Txt></NoteLine>
        </NoteText>
        {n.action && (
          <NoteAction>
            <svg width="14" height="16" viewBox="0 0 14 16" fill="none" stroke="#fff" strokeWidth="2"><path d="M1.500 6 L5.500 10 L12.500 2.500 M1 14.500 H13" /></svg>
          </NoteAction>
        )}
      </Note>
    ))}
    <ClearRow><BlueLine /></ClearRow>
    <Snack>
      <ClearAll><Txt $s={16} $w={700} $c="#fff">すべて消去</Txt></ClearAll>
      <DoneIcon c="#143f78" w={18} />
      <Cell $w={14} />
      <Txt $s={18.400} $c="#111">FPNSMobileChecker (8).apk。</Txt>
      <Spacer />
      <Txt $s={17} $w={500} $c="#1b487f">開く</Txt>
      <Cell $w={31} />
      <svg width="17" height="17" viewBox="0 0 17 17" stroke="#111" strokeWidth="2"><path d="M1 1 L16 16 M16 1 L1 16" /></svg>
    </Snack>
  </Shade>
);

/* ---------- installer screens ---------- */
const Installer = styled.section<{ $w: number; $h: number; $top: number; $r: number }>`
  width: ${(p) => p.$w}px;
  height: ${(p) => p.$h}px;
  margin-top: ${(p) => p.$top}px;
  border: 1px solid #000;
  border-right-width: ${(p) => p.$r}px;
  background: #fafafa;
  display: flex;
  flex-direction: column;
`;
const InstStatus = styled.div`
  height: 25px;
  flex: none;
  background: linear-gradient(#1f1f1f, #3a3a3a);
  display: flex;
  align-items: center;
  padding-left: 5px;
  color: #8a8a8a;
`;
const InstHeader = styled.header`
  height: 59px;
  flex: none;
  display: flex;
  align-items: center;
  padding-left: 16px;
  gap: 33px;
  background: linear-gradient(#808080, #a6a6a6 35%, #d2d2d2 70%, #efefef);
  box-shadow: 0 2px 5px rgba(0, 0, 0, 0.32);
  clip-path: inset(0 0 -12px 0);
  & > span { padding-top: 3px; }
`;
const InstBody = styled.div`
  flex: 1;
  padding: 20px 0 0 16px;
`;
const Line = styled.div`
  height: 22.3px;
  display: flex;
  align-items: center;
`;
const Done = styled.div`
  flex: 1;
  display: flex;
  flex-direction: column;
  align-items: center;
  padding-top: 192px;
  gap: 39px;
`;
const Actions = styled.div<{ $l: number; $gap: number }>`
  height: 67px;
  flex: none;
  padding: 2px 0 0 ${(p) => p.$l}px;
  display: flex;
  align-items: center;
  gap: ${(p) => p.$gap}px;
  border-bottom: 1px solid #bbb;
`;

const InstTop = ({ pct, time }: { pct: string; time: string }) => (
  <>
    <InstStatus>
      <Cell $w={25.2}><OutlookIcon c="#777" w={18} /></Cell>
      <Cell $w={25.2}><svg width="20" height="16" viewBox="0 0 20 16" fill="none" stroke="#777" strokeWidth="1.800"><path d="M7 13 H5 C0 13 0 7 4.500 6.500 C5 0 14 0 15 6 C20 6 20 13 15.500 13 H13 M10 16 V8 M7 10.500 L10 7.500 L13 10.500" /></svg></Cell>
      <Cell $w={25.2}><svg width="15" height="14" viewBox="0 0 15 14"><rect width="15" height="14" rx="1" fill="#777" /><path d="M2 11 L5 7 L7 9 L10 5 L13 11Z" fill="#303030" /></svg></Cell>
      <Cell $w={25.2}><DoneIcon c="#777" w={14} /></Cell>
      <Cell $w={25.2}><BugIcon c="#777" w={18} /></Cell>
      <Cell $w={25.2}><VirusIcon dim w={17} /></Cell>
      <Cell $w={31} />
      <Cell $w={25}><svg width="19" height="14" viewBox="0 0 19 14"><path d="M0 4 H4 L9 0 V14 L4 10 H0Z" fill="#777" /><path d="M11 4 L18 11 M18 4 L11 11" stroke="#777" strokeWidth="1.600" /></svg></Cell>
      <Cell $w={23}><Alarm c="#4a4a4a" /></Cell>
      <Cell $w={24}><svg width="15" height="12" viewBox="0 0 15 12"><path d="M0 2 Q7.500 -2 15 2 L7.500 12Z" fill="#777" /><path d="M5 4 h5 v3 h-5z" fill="#3a3a3a" /></svg></Cell>
      <Cell $w={17}><svg width="14" height="14" viewBox="0 0 14 14"><path d="M14 0 V14 H0Z" fill="#777" /></svg></Cell>
      <Cell $w={39}><Txt $s={14.500} $w={500}>{pct}</Txt></Cell>
      <Cell $w={12}><Battery c="#858585" top="#5c5c5c" h={14} /></Cell>
      <Cell $w={49}><Txt $s={15} $w={500}>{time}</Txt></Cell>
    </InstStatus>
    <InstHeader>
      <svg width="26" height="26" viewBox="0 0 26 26">
        <rect width="26" height="26" fill="#4ba3b8" /><path d="M0 13 H26" stroke="#75b7c6" />
        <rect x="4.500" y="2" width="4.500" height="8.500" rx="1" fill="none" stroke="#10242b" strokeWidth="1.200" />
        <path d="M14 5 H17 L20 3 V11 L17 9 H14Z M21.500 4.500 h1 v5 h-1z" fill="#10242b" />
        <path d="M2 18 H10 V22.500 H2Z M11 19 h1 v2.500 h-1z M18 15.500 h3 v6 h-3z M16.500 19 h6 l-3 4z M19 22 h1.500 v3 h-1.500z" fill="#10242b" />
      </svg>
      <Txt $s={21.300} $w={500} $c="#1d1d1d" $ls={-0.2}>CRAMobileChecker</Txt>
    </InstHeader>
  </>
);

const message = ["このアプリケーションをインストールし", "てもよろしいですか？このアプリケーシ", "ョンは特別なアクセス許可を必要としま", "せん。"];

/* ---------- annotations drawn over the screens ---------- */
const Overlay = styled.svg`
  position: absolute;
  left: 0;
  top: 0;
  z-index: 2;
`;
const Callout = styled.div<{ $x: number; $y: number; $c: string }>`
  position: absolute;
  z-index: 3;
  left: ${(p) => p.$x}px;
  top: ${(p) => p.$y}px;
  width: 334px;
  height: 70px;
  border: 3px solid ${(p) => p.$c};
  background: #fff;
  color: #000;
  display: flex;
  flex-direction: column;
  align-items: center;
  justify-content: center;
  & > span { line-height: 24px; }
`;

export default function App() {
  return (
    <Stage>
      <Global />
      <HomeScreen />
      <ShadeScreen />
      <Installer $w={379} $h={674} $top={2} $r={1}>
        <InstTop pct="78%" time="21:14" />
        <InstBody>
          {message.map((m) => <Line key={m}><Txt $s={18.95} $c="#333">{m}</Txt></Line>)}
        </InstBody>
        <Actions $l={169} $gap={26}>
          <Txt $s={15} $w={500} $c="#178f82" $ls={-0.3}>キャンセル</Txt>
          <Txt $s={15} $w={500} $c="#178f82" $ls={-0.2}>インストール</Txt>
        </Actions>
        <NavRow $h={50} $l={32} $black><NavIcons /></NavRow>
      </Installer>
      <Installer $w={381} $h={675} $top={0} $r={2}>
        <InstTop pct="77%" time="21:15" />
        <Done>
          <svg width="70" height="50" viewBox="0 0 70 50" fill="none" stroke="#c9c9c9" strokeWidth="7"><path d="M2.500 25 L22 45 L67 2.500" /></svg>
          <Txt $s={18.8} $c="#333">アプリをインストールしました。</Txt>
        </Done>
        <Actions $l={254} $gap={37}>
          <Txt $s={15} $w={500} $c="#178f82">完了</Txt>
          <Txt $s={15} $w={500} $c="#178f82">開く</Txt>
        </Actions>
        <NavRow $h={49} $l={32} $black><NavIcons /></NavRow>
      </Installer>

      <Overlay width="1567" height="686" viewBox="0 0 1567 686" fill="none">
        <path d="M177 21 H218 V204 H239.500 L197.600 244.500 L156 204 H177Z" fill="#fff" />
        <path d="M180 29 H215.500 V30.500 H180Z M180 36 H215.500 V207 H231 L197.600 240.500 L164 207 H180Z" fill="#fe0000" />
        <g stroke="#fe0000" strokeLinecap="round">
          <path d="M590.500 150 V289" strokeWidth="5" strokeLinecap="butt" /><path d="M582 278 L590.500 291 L599 278" strokeWidth="5" />
          <path d="M801 344 L1080 570" strokeWidth="4.200" /><path d="M1074 552 L1081 571 L1062.500 567" strokeWidth="5" />
          <path d="M1180 603.500 H1458" strokeWidth="5" /><path d="M1443 594.500 L1459 603.500 L1443 612.500" strokeWidth="5" />
        </g>
        <rect x="386.500" y="295.500" width="412" height="67.500" stroke="#ee0a0a" strokeWidth="3" />
        <rect x="1056.500" y="573.500" width="123" height="56.500" stroke="#df1010" strokeWidth="3" />
        <rect x="1462.500" y="571.500" width="97" height="56.500" stroke="#df1010" strokeWidth="3" />
      </Overlay>
      <Callout $x={34} $y={82} $c="#dc1113">
        <Txt $s={18} $w={300} $ls={0.55}>画面、上部から下に向かって</Txt>
        <Txt $s={18} $w={300}>スワイプする</Txt>
      </Callout>
      <Callout $x={426} $y={82} $c="#ee0a0a">
        <Txt $s={18} $ls={1}>通知領域が表示される</Txt>
        <Txt $s={18} $ls={-0.35}>ダウンロードされたファイルを選択</Txt>
      </Callout>
    </Stage>
  );
}
